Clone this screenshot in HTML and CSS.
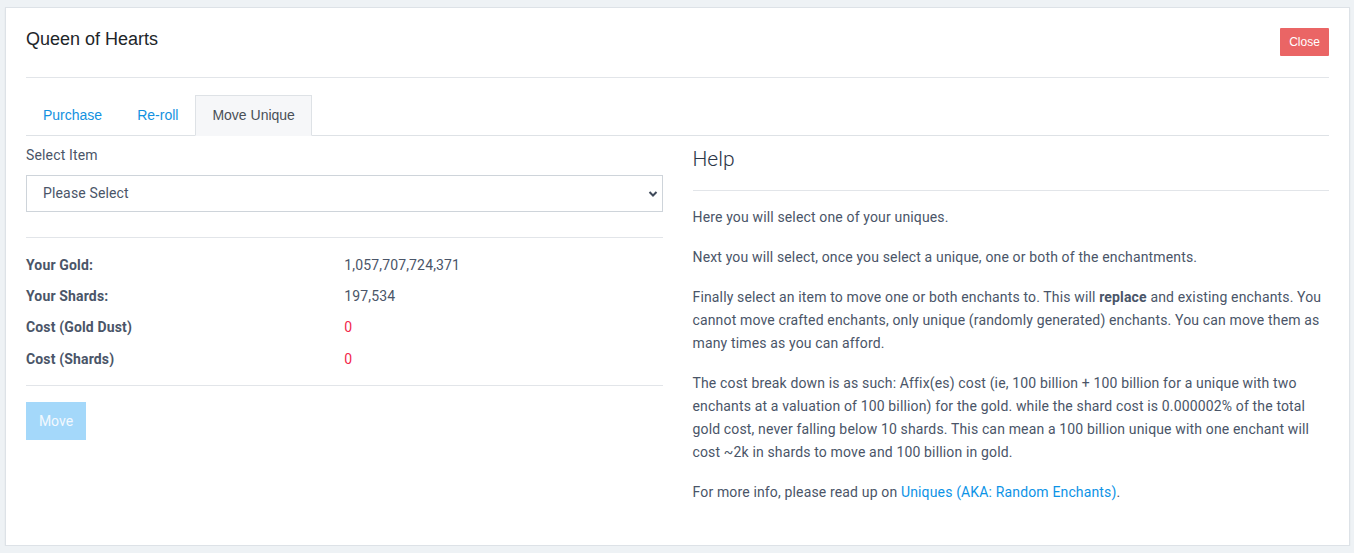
FILE: index.html
```html
<!DOCTYPE html>
<html>
<head>
<meta charset="utf-8">
<link rel="stylesheet" href="styles.css">
</head>
<body>
<div class="card">
  <div class="card-header">
    <h1 class="title">Queen of Hearts</h1>
    <button class="btn-close">Close</button>
  </div>
  <ul class="tabs">
    <li class="tab">Purchase</li>
    <li class="tab">Re-roll</li>
    <li class="tab active">Move Unique</li>
  </ul>
  <div class="row">
    <div class="col col-left">
      <label class="label">Select Item</label>
      <div class="select-wrap">
        <select class="select"><option>Please Select</option></select>
        <svg class="chev" width="10" height="8" viewBox="0 0 10 8"><path d="M1.5 2 L5 5.5 L8.5 2" fill="none" stroke="#3f4a5a" stroke-width="2"/></svg>
      </div>
      <hr class="rule rule-a">
      <div class="stats">
        <div class="stat"><span class="k">Your Gold:</span><span class="v">1,057,707,724,371</span></div>
        <div class="stat"><span class="k">Your Shards:</span><span class="v">197,534</span></div>
        <div class="stat"><span class="k">Cost (Gold Dust)</span><span class="v red">0</span></div>
        <div class="stat"><span class="k">Cost (Shards)</span><span class="v red">0</span></div>
      </div>
      <hr class="rule rule-b">
      <button class="btn-move">Move</button>
    </div>
    <div class="col col-right">
      <h2 class="help">Help</h2>
      <hr class="rule rule-c">
      <p>Here you will select one of your uniques.</p>
      <p>Next you will select, once you select a unique, one or both of the enchantments.</p>
      <p>Finally select an item to move one or both enchants to. This will <strong>replace</strong> and existing enchants. You cannot move crafted enchants, only unique (randomly generated) enchants. You can move them as many times as you can afford.</p>
      <p>The cost break down is as such: Affix(es) cost (ie, 100 billion + 100 billion for a unique with two enchants at a valuation of 100 billion) for the gold. while the shard cost is 0.000002% of the total gold cost, never falling below 10 shards. This can mean a 100 billion unique with one enchant will cost ~2k in shards to move and 100 billion in gold.</p>
      <p>For more info, please read up on <a class="link" href="#">Uniques (AKA: Random Enchants)</a>.</p>
    </div>
  </div>
</div>
</body>
</html>
```

FILE: styles.css
```css
* { box-sizing: border-box; }
html, body { margin: 0; padding: 0; }
body {
  background: #eef2f5;
  font-family: Roboto, "Liberation Sans", sans-serif;
  font-size: 14px;
  letter-spacing: 0.15px;
  color: #4a5568;
  padding: 7px 0 0 5px;
}
.card {
  width: 1345px;
  height: 539px;
  background: #fff;
  border: 1px solid #dde2e7;
  box-shadow: 0 1px 2px rgba(0,0,0,0.05);
  padding: 20px 20px 0 20px;
}
.card-header {
  display: flex;
  justify-content: space-between;
  align-items: flex-start;
  padding-bottom: 21px;
  border-bottom: 1px solid #e2e5e9;
  height: 50px;
}
.title {
  margin: 0;
  font-family: "Liberation Sans", Arial, sans-serif;
  font-weight: 400;
  font-size: 18px;
  line-height: 22px;
  letter-spacing: 0;
  color: #212529;
  padding-top: 0;
}
.btn-close {
  width: 49px;
  height: 28px;
  border: 0;
  border-radius: 1px;
  background: #ea6565;
  color: #fff;
  font-family: "Liberation Sans", Arial, sans-serif;
  font-size: 12px;
  letter-spacing: 0;
  padding: 0;
}
.tabs {
  list-style: none;
  margin: 17px 0 0 0;
  padding: 0;
  display: flex;
  border-bottom: 1px solid #dee2e6;
  height: 41px;
}
.tab {
  font-family: "Liberation Sans", Arial, sans-serif;
  font-size: 14px;
  letter-spacing: 0;
  line-height: 20px;
  padding: 9px 16px 10px 16px;
  color: #1391e0;
  border: 1px solid transparent;
  border-bottom: 0;
  margin-bottom: -1px;
  height: 41px;
}
.tab:first-child { padding-left: 16px; padding-right: 17px; }
.tab.active {
  color: #495057;
  background: #f6f7f9;
  border-color: #dee2e6;
  border-bottom: 1px solid #f6f7f9;
}
.row {
  display: flex;
  gap: 30px;
}
.col { flex: 1 1 0; min-width: 0; }
.col-left { padding-top: 9px; }
.label {
  display: block;
  line-height: 21px;
  margin-bottom: 9px;
  color: #4a5568;
}
.select-wrap { position: relative; }
.select {
  display: block;
  width: 100%;
  height: 37px;
  -webkit-appearance: none;
  appearance: none;
  border: 1px solid #ced4da;
  border-radius: 0;
  background: #fff;
  padding: 0 16px 1px 16px;
  font-family: Roboto, sans-serif;
  font-size: 14px;
  letter-spacing: 0.15px;
  color: #4a5568;
}
.chev {
  position: absolute;
  right: 5px;
  top: 15px;
}
.rule {
  border: 0;
  border-top: 1px solid #e2e5e9;
  margin: 0;
}
.rule-a { margin-top: 25px; margin-bottom: 11px; }
.stat {
  display: flex;
  height: 31.4px;
  align-items: center;
}
.k { width: 50%; font-weight: 700; color: #4a5568; }
.v { width: 50%; color: #4a5568; }
.red { color: #f2264b; }
.rule-b { margin-top: 10px; margin-bottom: 16px; }
.btn-move {
  width: 60px;
  height: 38px;
  border: 0;
  background: #a4d8fa;
  color: #f3f9fe;
  font-family: Roboto, sans-serif;
  font-size: 14px;
  padding: 0;
}
.help {
  margin: 11px 0 0 0;
  font-weight: 300;
  font-size: 21px;
  line-height: 25px;
  letter-spacing: 0;
  color: #2d3748;
}
.rule-c { margin-top: 18px; margin-bottom: 15px; }
.col-right p {
  margin: 0 0 17px 0;
  line-height: 23px;
}
.col-right strong { font-weight: 700; }
.link { color: #0d93e6; text-decoration: none; }
```
